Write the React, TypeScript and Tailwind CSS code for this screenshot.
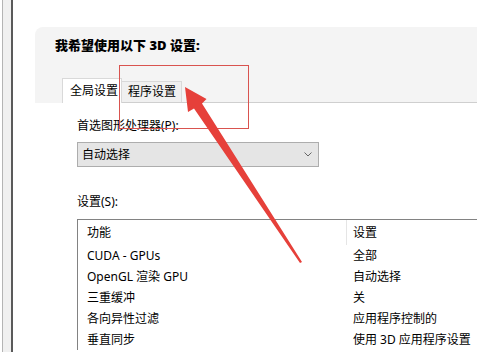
const rows = [
  { name: "CUDA - GPUs", value: "全部" },
  { name: "OpenGL 渲染 GPU", value: "自动选择" },
  { name: "三重缓冲", value: "关" },
  { name: "各向异性过滤", value: "应用程序控制的" },
  { name: "垂直同步", value: "使用 3D 应用程序设置" },
];

const Arrow = () => (
  <svg
    className="absolute inset-0 pointer-events-none"
    width="477"
    height="352"
    viewBox="0 0 477 352"
  >
    <polygon
      points="185,87 188,112 194,108.5 300,263 302,262 202,103.5 206.5,99"
      fill="#e6403a"
    />
  </svg>
);

export default function App() {
  return (
    <div
      className="relative flex w-[477px] h-[352px] overflow-hidden bg-white text-black"
      style={{ fontFamily: '"Noto Sans", "Noto Sans CJK SC", sans-serif' }}
    >
      {/* left window edge */}
      <div className="flex h-full shrink-0">
        <div className="w-[2px] bg-white" />
        <div className="w-[1px] bg-[#b4b4b4]" />
        <div className="w-[8px] bg-[#f0f0f0]" />
        <div className="w-[2px] bg-[#5a5a5a]" />
      </div>

      <div className="flex-1 min-w-0 pl-[22px] pt-[27px]">
        <div className="w-[480px] rounded-tl-[8px] bg-[#f4f4f4] pt-[9px]">
          <div className="pl-[20px] text-[13px] leading-[18px] font-black">
            我希望使用以下 3D 设置:
          </div>
          <div className="ml-[27px] mt-[24px] flex h-[25px] items-end border-b border-[#cfcfcf]">
            <div className="-mb-px flex h-[25px] w-[60px] items-center border-x border-t border-[#d9d9d9] bg-white pl-[7px] text-[12px] leading-[16px]">
              全局设置
            </div>
            <div className="flex h-[21px] w-[60px] items-center border-r border-t border-[#d9d9d9] bg-[#f0f0f0] pl-[6px] text-[12px] leading-[16px]">
              程序设置
            </div>
          </div>
        </div>

        <div className="pl-[42px] pt-[15px] text-[12px] leading-[16px]">
          <div>首选图形处理器(P):</div>
          <div className="mt-[8px] flex h-[25px] w-[242px] items-center justify-between border border-[#adadad] bg-[#e5e5e5] pl-[4px] pr-[6px]">
            <span>自动选择</span>
            <svg width="8" height="5" viewBox="0 0 8 5">
              <polyline
                points="0.5,0.5 4,4 7.5,0.5"
                fill="none"
                stroke="#666"
                strokeWidth="1"
              />
            </svg>
          </div>
          <div className="mt-[27px]">设置(S):</div>
          <div className="mt-[9px] w-[420px] border-l border-t border-[#828282] bg-white">
            <div className="flex h-[25px] items-center">
              <div className="w-[268px] pl-[9px]">功能</div>
              <div className="flex h-full items-center border-l border-[#e5e5e5] pl-[6px]">
                设置
              </div>
            </div>
            {rows.map((r) => (
              <div key={r.name} className="flex h-[21px] items-center">
                <div className="w-[268px] pl-[9px]">{r.name}</div>
                <div className="pl-[7px]">{r.value}</div>
              </div>
            ))}
          </div>
        </div>
      </div>

      {/* annotation */}
      <div className="absolute left-[119px] top-[65px] h-[64px] w-[130px] border border-[#d9534f]" />
      <Arrow />
    </div>
  );
}
